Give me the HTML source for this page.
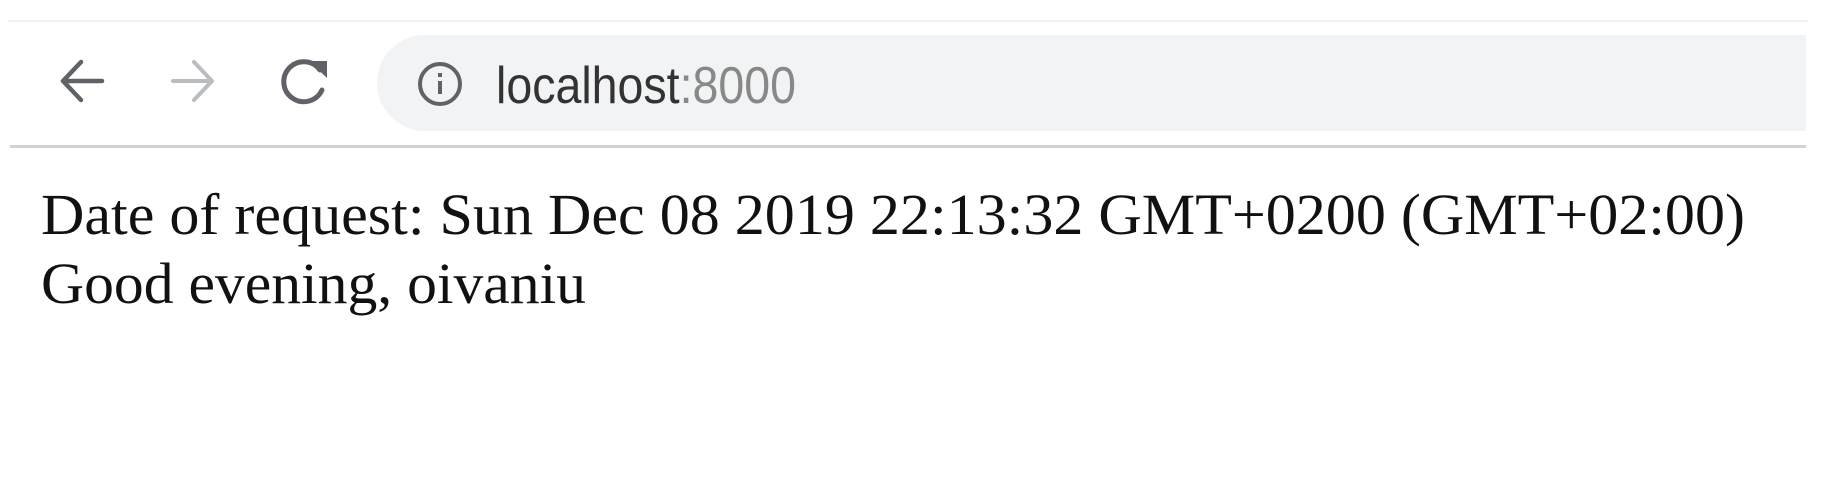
<!DOCTYPE html>
<html><head><meta charset="utf-8">
<style>
html,body{margin:0;padding:0;background:#fff;width:1830px;height:480px;overflow:hidden}
svg{display:block}
</style></head>
<body>
<svg width="1830" height="480" viewBox="0 0 1830 480" xmlns="http://www.w3.org/2000/svg">
  <rect width="1830" height="480" fill="#fff"/>
  <rect x="8" y="20" width="1800" height="2" fill="#eef0f3"/>
  <path d="M425 35 H1806 V131 H425 A48 48 0 0 1 377 83 A48 48 0 0 1 425 35 Z" fill="#f1f3f4"/>
  <rect x="10" y="145" width="1796" height="3" fill="#d0d2d5"/>
  <g fill="none" stroke="#5f6368" stroke-width="4.5" stroke-linecap="round" stroke-linejoin="round">
    <path d="M102 81 H64 M81 62 L63 81 L81 100"/>
  </g>
  <g fill="none" stroke="#b9bcc0" stroke-width="4" stroke-linecap="round" stroke-linejoin="round">
    <path d="M173 81 H211 M194 62 L212 81 L194 100"/>
  </g>
  <g fill="none" stroke="#5f6368" stroke-width="5" stroke-linecap="round">
    <path d="M320 70 A20 20 0 1 0 322 90"/>
  </g>
  <path d="M309 61 L327 61 L327 78 Z" fill="#5f6368"/>
  <circle cx="440" cy="84" r="20" fill="none" stroke="#5f6368" stroke-width="4"/>
  <rect x="438" y="81" width="4" height="13" fill="#5f6368"/>
  <rect x="438" y="73" width="4" height="4" fill="#5f6368"/>
  <text x="496" y="103" font-family="Liberation Sans, sans-serif" font-size="52" textLength="300" lengthAdjust="spacingAndGlyphs"><tspan fill="#333">localhost</tspan><tspan fill="#888">:8000</tspan></text>
  <text x="41" y="234" font-family="Liberation Serif, serif" font-size="58" fill="#111" textLength="1704" lengthAdjust="spacingAndGlyphs">Date of request: Sun Dec 08 2019 22:13:32 GMT+0200 (GMT+02:00)</text>
  <text x="41" y="303" font-family="Liberation Serif, serif" font-size="58" fill="#111" textLength="545" lengthAdjust="spacingAndGlyphs">Good evening, oivaniu</text>
</svg>
</body></html>
